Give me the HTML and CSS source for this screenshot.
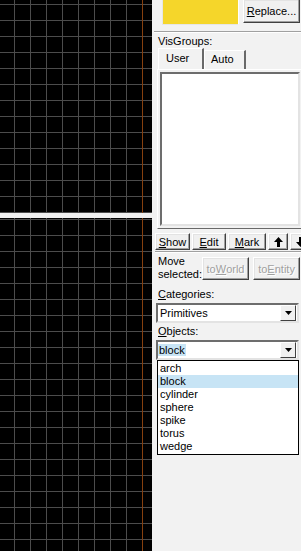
FILE: index.html
```html
<!DOCTYPE html>
<html>
    <head>
        <meta charset="utf-8">
        <title>Editor</title>
        <link rel="stylesheet" href="styles.css">
    </head>
    <body>
        <div class="app">
            <div class="views">
                <div class="view view-top"></div>
                <div class="view view-bottom"></div>
            </div>

            <div class="panel">
                <div class="color-row">
                    <div class="swatch"></div>
                    <button class="btn btn-replace"><u>R</u>eplace...</button>
                </div>
                <div class="sep sep-top"></div>

                <div class="label label-vis">VisGroups:</div>
                <div class="tabs">
                    <div class="tab tab-active">User</div>
                    <div class="tab">Auto</div>
                </div>
                <div class="tab-body">
                    <div class="listbox"></div>
                </div>

                <div class="btn-row">
                    <button class="btn btn-show"><u>S</u>how</button>
                    <button class="btn btn-edit"><u>E</u>dit</button>
                    <button class="btn btn-mark"><u>M</u>ark</button>
                    <button class="btn btn-arrow">
                        <svg width="9" height="10" viewBox="0 0 9 10"><path d="M4.5 0 L9 5 H6 V10 H3 V5 H0 Z" fill="#000"/></svg>
                    </button>
                    <button class="btn btn-arrow">
                        <svg width="9" height="10" viewBox="0 0 9 10"><path d="M4.5 10 L9 5 H6 V0 H3 V5 H0 Z" fill="#000"/></svg>
                    </button>
                </div>
                <div class="sep sep-mid"></div>

                <div class="move-row">
                    <div class="move-label">Move<br>selected:</div>
                    <button class="btn btn-move" disabled>to<u>W</u>orld</button>
                    <button class="btn btn-move" disabled>to<u>E</u>ntity</button>
                </div>

                <div class="label label-cat"><u>C</u>ategories:</div>
                <div class="combo">
                    <span class="combo-text">Primitives</span>
                    <span class="combo-btn"><svg width="7" height="4" viewBox="0 0 7 4"><path d="M0 0 H7 L3.5 4 Z" fill="#000"/></svg></span>
                </div>

                <div class="label label-obj"><u>O</u>bjects:</div>
                <div class="combo">
                    <span class="combo-text"><span class="selected-text">block</span></span>
                    <span class="combo-btn"><svg width="7" height="4" viewBox="0 0 7 4"><path d="M0 0 H7 L3.5 4 Z" fill="#000"/></svg></span>
                </div>
                <ul class="droplist">
                    <li>arch</li>
                    <li class="hl">block</li>
                    <li>cylinder</li>
                    <li>sphere</li>
                    <li>spike</li>
                    <li>torus</li>
                    <li>wedge</li>
                </ul>
            </div>
        </div>
    </body>
</html>
```

FILE: styles.css
```css
body {
    margin: 0;
    font-family: "Liberation Sans", Arial, sans-serif;
    font-size: 11px;
    line-height: 13px;
    color: #000;
    background: #f2f2f2;
}
.app {
    display: flex;
    width: 301px;
    height: 551px;
    overflow: hidden;
}

/* 2d views */
.views {
    display: flex;
    flex-direction: column;
    gap: 5px;
    width: 152px;
    background: #f0f0f0;
}
.view {
    background-color: #000;
    background-image:
        linear-gradient(90deg, transparent 142px, #86400f 142px, #86400f 143px, transparent 143px),
        linear-gradient(90deg, #4c4c4c 1px, transparent 1px),
        linear-gradient(#4c4c4c 1px, transparent 1px);
    background-size: 100% 100%, 16px 16px, 16px 16px;
    background-repeat: no-repeat, repeat, repeat;
}
.view-top {
    height: 213px;
    background-position: 0 0, 14px 0, 0 4px;
}
.view-bottom {
    flex: 1;
    background-position: 0 0, 14px 0, 0 1px;
}

/* side panel */
.panel {
    width: 149px;
    overflow: hidden;
    background: #f2f2f2;
}
.btn {
    font-family: "Liberation Sans", Arial, sans-serif;
    font-size: 11px;
    color: #000;
    background: #f0f0f0;
    padding: 0;
    border: 1px solid;
    border-color: #fff #404040 #404040 #fff;
    box-shadow: inset -1px -1px #a0a0a0, inset 1px 1px #e3e3e3;
    display: flex;
    align-items: center;
    justify-content: center;
    flex-shrink: 0;
}
.btn:disabled {
    color: #a0a0a0;
    text-shadow: 1px 1px #fff;
}

.color-row {
    display: flex;
    height: 24px;
}
.swatch {
    width: 75px;
    height: 24px;
    margin: -1px 0 0 10px;
    background: #f5d62a;
    border: 1px solid #e6e6e6;
    border-right-color: #fff;
}
.btn-replace {
    width: 57px;
    height: 24px;
    margin-left: 4px;
    margin-top: -1px;
}

.sep {
    border-top: 1px solid #a0a0a0;
    border-bottom: 1px solid #fff;
}
.sep-top {
    margin: 7px 0 0 2px;
}
.label {
    padding-left: 6px;
}
.label-vis {
    margin-top: 2px;
}
.label-obj {
    margin-top: 2px;
}
.tabs {
    display: flex;
    align-items: flex-end;
    height: 21px;
    padding-left: 6px;
}
.tab {
    height: 18px;
    padding-left: 6px;
    width: 33px;
    border: 1px solid #fff;
    border-bottom: none;
    border-right: 2px solid #696969;
    line-height: 17px;
}
.tab-active {
    height: 20px;
    width: 36px;
    padding-left: 7px;
    line-height: 19px;
    position: relative;
    z-index: 1;
    background: #f2f2f2;
}
.tab-body {
    width: 140px;
    height: 154px;
    margin-left: 5px;
    border: 1px solid #fff;
    border-right-color: #696969;
    border-bottom-color: #696969;
    padding: 2px;
}
.listbox {
    height: 150px;
    background: #fff;
    border: 2px solid;
    border-color: #6d6d6d #e3e3e3 #e3e3e3 #6d6d6d;
}

.btn-row {
    display: flex;
    gap: 2px;
    margin: 4px 0 0 3px;
    height: 17px;
}
.btn-row .btn {
    height: 17px;
}
.btn-show { width: 35px; }
.btn-edit { width: 34px; }
.btn-mark { width: 38px; }
.btn-arrow { width: 20px; }
.sep-mid {
    margin: 1px 0 0 3px;
}

.move-row {
    display: flex;
    margin-top: 2px;
}
.move-label {
    width: 45px;
    padding-left: 6px;
}
.btn-move {
    width: 47px;
    height: 23px;
    margin-top: 2px;
    margin-right: 4px;
}

.label-cat {
    margin-top: 7px;
}
.combo {
    display: flex;
    align-items: center;
    justify-content: space-between;
    width: 139px;
    height: 16px;
    margin: 2px 0 0 4px;
    background: #fff;
    border: 2px solid;
    border-color: #6d6d6d #e3e3e3 #e3e3e3 #6d6d6d;
}
.combo-text {
    padding-left: 2px;
}
.selected-text {
    background: #c7e4f5;
    padding: 0 1px;
    margin-left: -2px;
}
.combo-btn {
    width: 14px;
    height: 14px;
    margin-right: 1px;
    background: #f0f0f0;
    border: 1px solid;
    border-color: #fff #404040 #404040 #fff;
    display: flex;
    align-items: center;
    justify-content: center;
}
.droplist {
    list-style: none;
    margin: 0 0 0 5px;
    padding: 1px 0;
    width: 140px;
    background: #fff;
    border: 1px solid #000;
}
.droplist li {
    height: 13px;
    padding-left: 2px;
}
.droplist .hl {
    background: #c7e4f5;
}
```
